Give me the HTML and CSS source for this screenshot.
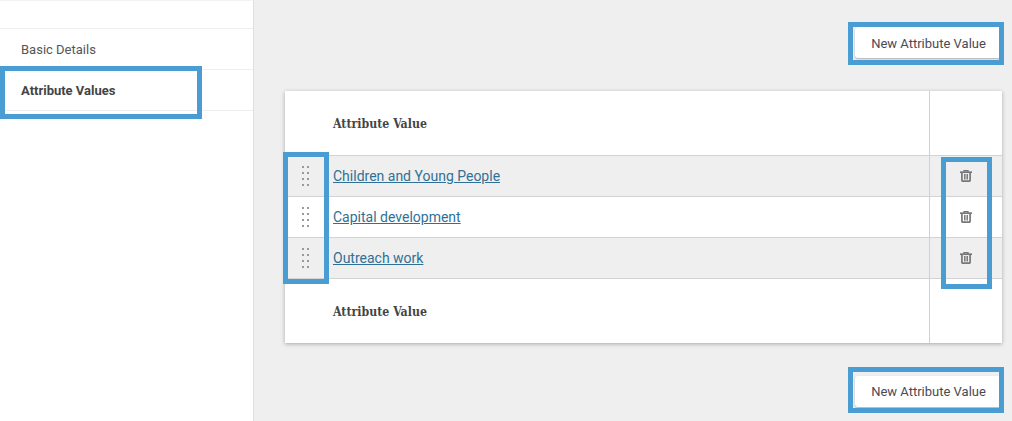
FILE: index.html
```html
<!DOCTYPE html>
<html lang="en">
<head>
<meta charset="utf-8">
<title>Attribute Values</title>
<link rel="stylesheet" href="styles.css">
</head>
<body>
<div class="page">
  <nav class="sidebar">
    <a class="nav-item">Basic Details</a>
    <a class="nav-item active">Attribute Values</a>
  </nav>
  <main class="main">
    <div class="actions actions-top"><button class="btn">New Attribute Value</button></div>
    <table class="card">
      <thead>
        <tr class="head-row"><th class="c-handle"></th><th class="c-name">Attribute Value</th><th class="c-del"></th></tr>
      </thead>
      <tbody>
        <tr class="row odd">
          <td class="c-handle"><svg class="grip" viewBox="0 0 7 20"><use href="#grip"/></svg></td>
          <td class="c-name"><a class="link">Children and Young People</a></td>
          <td class="c-del"><svg class="trash" viewBox="0 0 12 12"><use href="#trash"/></svg></td>
        </tr>
        <tr class="row">
          <td class="c-handle"><svg class="grip" viewBox="0 0 7 20"><use href="#grip"/></svg></td>
          <td class="c-name"><a class="link">Capital development</a></td>
          <td class="c-del"><svg class="trash" viewBox="0 0 12 12"><use href="#trash"/></svg></td>
        </tr>
        <tr class="row odd">
          <td class="c-handle"><svg class="grip" viewBox="0 0 7 20"><use href="#grip"/></svg></td>
          <td class="c-name"><a class="link">Outreach work</a></td>
          <td class="c-del"><svg class="trash" viewBox="0 0 12 12"><use href="#trash"/></svg></td>
        </tr>
      </tbody>
      <tfoot>
        <tr class="foot-row"><th class="c-handle"></th><th class="c-name">Attribute Value</th><th class="c-del"></th></tr>
      </tfoot>
    </table>
    <div class="actions actions-bottom"><button class="btn">New Attribute Value</button></div>
  </main>
  <div class="mark mark-nav"></div>
  <div class="mark mark-top"></div>
  <div class="mark mark-handles"></div>
  <div class="mark mark-trash"></div>
  <div class="mark mark-bottom"></div>
</div>
<svg class="defs" width="0" height="0" aria-hidden="true">
  <defs>
    <g id="grip" fill="#9a9a9a">
      <rect x="0" y="0" width="2" height="2"/><rect x="5" y="0" width="2" height="2"/>
      <rect x="0" y="6" width="2" height="2"/><rect x="5" y="6" width="2" height="2"/>
      <rect x="0" y="12" width="2" height="2"/><rect x="5" y="12" width="2" height="2"/>
      <rect x="0" y="18" width="2" height="2"/><rect x="5" y="18" width="2" height="2"/>
    </g>
    <g id="trash" fill="none" stroke="#777" stroke-width="1.7">
      <path d="M0 2.2H12" stroke-width="1.7"/>
      <path d="M4 2V.7H8V2" stroke-width="1.3"/>
      <path d="M1.9 2.5V10.2Q1.9 11.2 3 11.2H9Q10.1 11.2 10.1 10.2V2.5"/>
      <path d="M4.8 4V9.5M7.2 4V9.5" stroke-width="1.5"/>
    </g>
  </defs>
</svg>
</body>
</html>
```
FILE: styles.css
```css
* { box-sizing: border-box; }
html, body { margin: 0; padding: 0; }
body {
  width: 1012px;
  height: 421px;
  overflow: hidden;
  font-family: Roboto, sans-serif;
  color: #4a4a4a;
}
.page {
  position: relative;
  display: flex;
  width: 1012px;
  height: 421px;
  background: #efefef;
  overflow: hidden;
}
.sidebar {
  width: 254px;
  flex: none;
  background: #fff;
  border-right: 1px solid #dedede;
  border-top: 1px solid #f3f3f3;
  padding-top: 27px;
}
.nav-item {
  display: block;
  height: 41px;
  padding: 0 21px;
  line-height: 41px;
  font-size: 13px;
  color: #555;
  border-top: 1px solid #eeeeee;
}
.nav-item.active {
  font-weight: 700;
  color: #444;
  height: 42px;
  border-bottom: 1px solid #eeeeee;
}
.main {
  flex: 1;
  min-width: 0;
  padding: 0 10px 0 31px;
}
.actions { display: flex; justify-content: flex-end; }
.actions-top { padding-top: 27px; height: 91px; }
.actions-bottom { padding-top: 33px; }
.btn {
  width: 147px;
  height: 31px;
  padding: 1px 0 0;
  font: 400 13px/30px Roboto, sans-serif;
  color: #4a4a55;
  background: #fff;
  border: 0;
  border-radius: 3px;
  box-shadow: 0 1px 2px rgba(0, 0, 0, .28);
}
.actions-top .btn { padding-top: 2px; }
.card {
  width: 717px;
  height: 252px;
  border-collapse: collapse;
  table-layout: fixed;
  background: #fff;
  box-shadow: 0 1px 4px rgba(0, 0, 0, .3);
}
.c-handle { width: 48px; padding: 0; text-align: center; }
.c-name { padding: 0; text-align: left; }
.c-del { width: 73px; padding: 0; text-align: center; border-left: 1px solid #d0d0d0; }
th.c-name {
  font: 700 12.25px "DejaVu Serif Condensed", "Liberation Serif", serif;
  color: #444;
  padding-top: 2px;
}
.head-row { height: 64px; }
.foot-row { height: 65px; }
.row { height: 41px; border-top: 1px solid #d3d3d3; }
.row.odd { background: #efefef; }
tfoot tr { border-top: 1px solid #d3d3d3; }
.link {
  font-size: 14px;
  color: #2f7196;
  text-decoration: underline;
}
.grip { display: block; width: 7px; height: 20px; margin: 0 0 0 17px; }
.trash { display: block; width: 12px; height: 12px; margin: 0 0 0 30px; }
.defs { position: absolute; }
.mark {
  position: absolute;
  border: 5px solid #4a9dd3;
  pointer-events: none;
}
.mark-nav { left: 0; top: 66px; width: 202px; height: 53px; }
.mark-top { left: 848px; top: 22px; width: 156px; height: 43px; }
.mark-handles { left: 283px; top: 152px; width: 46px; height: 132px; }
.mark-trash { left: 941px; top: 157px; width: 51px; height: 132px; }
.mark-bottom { left: 848px; top: 367px; width: 156px; height: 46px; }
```
